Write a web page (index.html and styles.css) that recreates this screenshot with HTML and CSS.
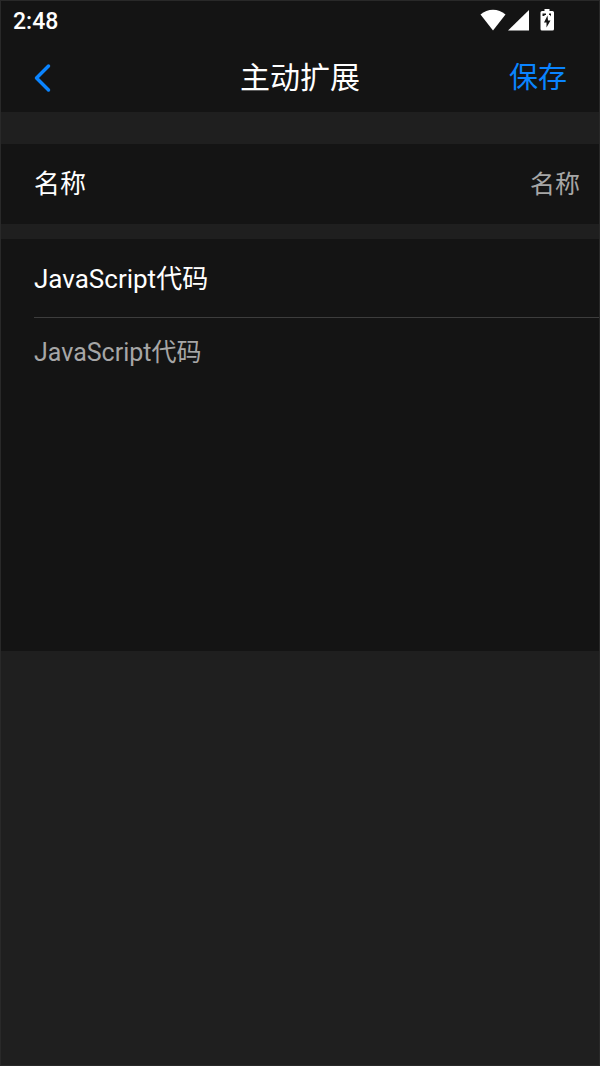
FILE: index.html
```html
<!DOCTYPE html>
<html lang="zh-CN">
<head>
  <meta charset="UTF-8">
  <meta name="viewport" content="width=device-width, initial-scale=1.0">
  <title>主动扩展</title>
  <link rel="stylesheet" href="styles.css">
</head>
<body>
  <form class="screen">

    <header class="header">
      <!-- Status bar -->
      <div class="status-bar">
        <span class="time">2:48</span>
        <svg class="status-icons" width="74" height="24" viewBox="0 0 74 24" fill="#fff" aria-hidden="true">
          <path d="M0.5 5.500C7.5-1 18.5-1 25.5 5.500L13 21.500Z"/>
          <path d="M28 21.500L49 1V21.500Z"/>
          <path fill-rule="evenodd" d="M64.500 0h5v2h3q1.500 0 1.500 1.500v16.500q0 1.500-1.500 1.500h-10.500q-1.500 0-1.500-1.500v-16.500q0-1.500 1.500-1.500h2.500zM62.500 4.500v2.500h2v-1h1.500v-1.500zM69 4.500v1.500h1l1 1.500v-3zM67.500 6.500L64 13.500h2.500v5L70.500 11.500H68z"/>
        </svg>
      </div>

      <!-- Navigation -->
      <div class="nav">
        <button type="button" class="back" aria-label="返回">
          <svg width="18" height="30" viewBox="0 0 18 30" fill="none" stroke="#0a84ff" stroke-width="3.500" stroke-linecap="round" stroke-linejoin="round">
            <path d="M15.500 3L3.500 15L15.500 27"/>
          </svg>
        </button>
        <h1 class="title">主动扩展</h1>
        <button type="submit" class="save">保存</button>
      </div>
    </header>

    <div class="row">
      <label class="label" for="name">名称</label>
      <input class="field name-input" type="text" id="name" placeholder="名称">
    </div>

    <div class="code-section">
      <label class="label code-label" for="code">JavaScript代码</label>
      <textarea class="field code-input" id="code" placeholder="JavaScript代码"></textarea>
    </div>

  </form>
</body>
</html>
```
FILE: styles.css
```css
* {
  box-sizing: border-box;
}
body {
  margin: 0;
  background-color: #1f1f1f;
  color: #fff;
  font-family: Roboto, "Noto Sans CJK SC", sans-serif;
}
button, input, textarea {
  font-family: inherit;
  border: none;
  background: none;
  padding: 0;
  margin: 0;
  outline: none;
}
.screen {
  min-height: 100vh;
  border: 1px solid #292929;
}

/* Header */
.header {
  background-color: #141414;
}
.status-bar {
  display: flex;
  justify-content: space-between;
  align-items: center;
  height: 40px;
  padding: 0 45px 0 12px;
}
.time {
  font-size: 23px;
  font-weight: 500;
}
.nav {
  display: grid;
  grid-template-columns: 1fr auto 1fr;
  align-items: center;
  height: 71px;
  padding: 2px 32px 0;
}
.back {
  justify-self: start;
  display: flex;
  cursor: pointer;
}
.title {
  margin: 0;
  font-size: 30px;
  font-weight: 400;
  line-height: 40px;
}
.save {
  justify-self: end;
  color: #0a84ff;
  font-size: 29px;
  line-height: 40px;
  cursor: pointer;
}

/* Form */
.label {
  font-size: 26px;
  line-height: 80px;
}
.field {
  color: #fff;
  font-size: 25px;
}
.field::placeholder {
  color: #a6a6a6;
  opacity: 1;
}
.row {
  display: flex;
  align-items: center;
  height: 80px;
  margin: 32px 0 15px;
  padding: 0 19px 0 33px;
  background-color: #141414;
}
.name-input {
  flex: 1;
  min-width: 0;
  text-align: right;
}
.code-section {
  padding-left: 33px;
  background-color: #141414;
}
.code-label {
  display: block;
  height: 79px;
  border-bottom: 1px solid #3d3d3d;
}
.code-input {
  display: block;
  width: 100%;
  height: 333px;
  padding: 17px 19px 17px 0;
  line-height: 36px;
  resize: none;
}
```
